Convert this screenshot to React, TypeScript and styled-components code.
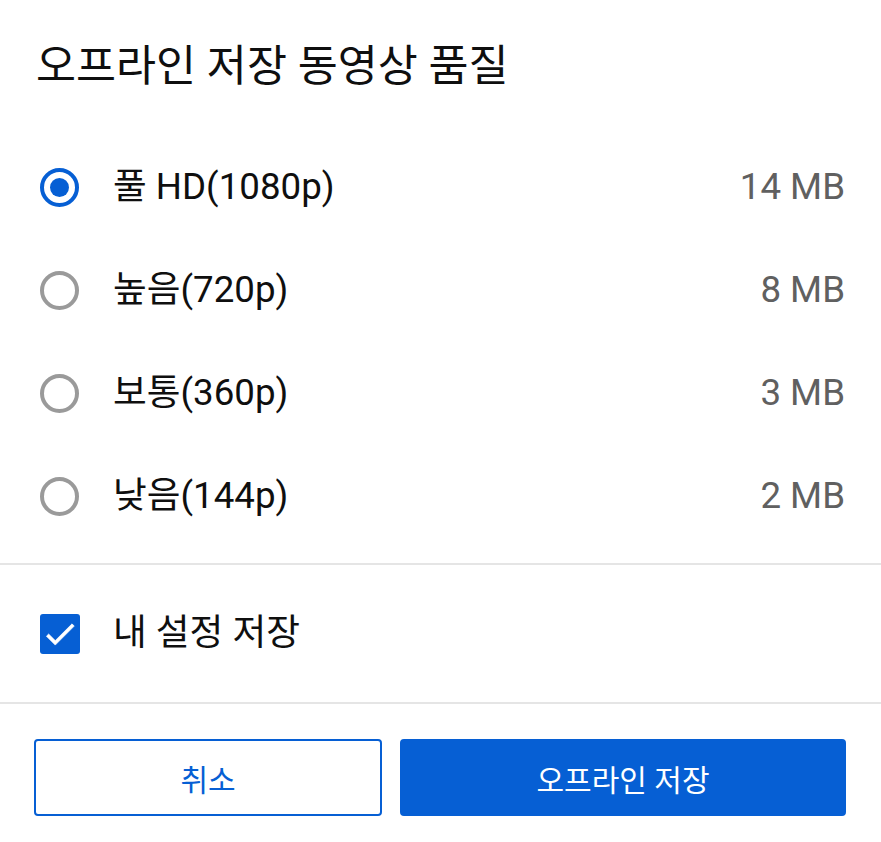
import React, { useState } from "react";
import styled, { createGlobalStyle } from "styled-components";

const Global = createGlobalStyle`
  html, body { margin: 0; padding: 0; background: #fff; }
  body { font-family: Roboto, "Noto Sans CJK KR", sans-serif; color: #0f0f0f; }
  * { box-sizing: border-box; }
`;

const BLUE = "#065fd4";

const Dialog = styled.div`
  width: 881px;
  height: 842px;
  background: #fff;
  display: flex;
  flex-direction: column;
`;

const Title = styled.h1`
  margin: 0;
  height: 136px;
  padding: 0 36px 2px;
  display: flex;
  align-items: center;
  font-size: 43.5px;
  font-weight: 400;
  line-height: 1;
  color: #0f0f0f;
`;

const List = styled.div`
  display: flex;
  flex-direction: column;
  padding-bottom: 15px;
`;

const Row = styled.label`
  height: 103px;
  padding: 0 36px 0 40px;
  display: grid;
  grid-template-columns: 40px 1fr auto;
  column-gap: 33px;
  align-items: center;
  cursor: pointer;
`;

const RadioCircle = styled.span<{ $on: boolean }>`
  width: 39px;
  height: 39px;
  border-radius: 50%;
  border: 4px solid ${(p) => (p.$on ? BLUE : "#9a9a9a")};
  display: flex;
  align-items: center;
  justify-content: center;
  &::after {
    content: "";
    width: 19px;
    height: 19px;
    border-radius: 50%;
    background: ${BLUE};
    display: ${(p) => (p.$on ? "block" : "none")};
  }
`;

const Label = styled.span`
  font-size: 36.7px;
  line-height: 1;
  color: #0f0f0f;
`;

const Size = styled.span`
  font-size: 36.7px;
  line-height: 1;
  color: #606060;
`;

const Divider = styled.hr`
  margin: 0;
  border: 0;
  height: 2px;
  background: #e5e5e5;
`;

const CheckRow = styled.label`
  height: 137px;
  padding: 0 36px 0 40px;
  display: flex;
  align-items: center;
  gap: 33px;
  cursor: pointer;
`;

const CheckBox = styled.span`
  width: 40px;
  height: 40px;
  border-radius: 3px;
  background: ${BLUE};
  display: flex;
  align-items: center;
  justify-content: center;
`;

const Actions = styled.div`
  display: grid;
  grid-template-columns: 348px 1fr;
  column-gap: 18px;
  padding: 35px 35px 0 34px;
`;

const Button = styled.button<{ $primary?: boolean }>`
  height: 77px;
  border-radius: 4px;
  border: 2px solid ${BLUE};
  background: ${(p) => (p.$primary ? BLUE : "#fff")};
  color: ${(p) => (p.$primary ? "#fff" : BLUE)};
  font-family: Roboto, "Noto Sans CJK KR", sans-serif;
  font-size: 30px;
  font-weight: 400;
  cursor: pointer;
`;

const options = [
  { label: "풀 HD(1080p)", size: "14 MB" },
  { label: "높음(720p)", size: "8 MB" },
  { label: "보통(360p)", size: "3 MB" },
  { label: "낮음(144p)", size: "2 MB" },
];

export default function App() {
  const [sel, setSel] = useState(0);
  return (
    <Dialog>
      <Global />
      <Title>오프라인 저장 동영상 품질</Title>
      <List>
        {options.map((o, i) => (
          <Row key={o.label} onClick={() => setSel(i)}>
            <RadioCircle $on={sel === i} />
            <Label>{o.label}</Label>
            <Size>{o.size}</Size>
          </Row>
        ))}
      </List>
      <Divider />
      <CheckRow>
        <CheckBox>
          <svg width="38" height="38" viewBox="0 0 24 24">
            <path d="M9 16.17L4.83 12l-1.42 1.41L9 19 21 7l-1.41-1.41z" fill="#fff" stroke="#fff" strokeWidth="0.4" />
          </svg>
        </CheckBox>
        <Label>내 설정 저장</Label>
      </CheckRow>
      <Divider />
      <Actions>
        <Button>취소</Button>
        <Button $primary>오프라인 저장</Button>
      </Actions>
    </Dialog>
  );
}
